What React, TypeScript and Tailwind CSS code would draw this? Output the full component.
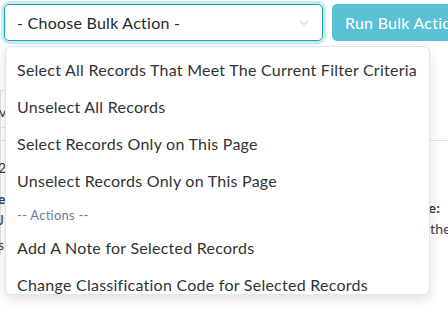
import { ChevronDown } from 'lucide-react';

const items = [
  'Select All Records That Meet The Current Filter Criteria',
  'Unselect All Records',
  'Select Records Only on This Page',
  'Unselect Records Only on This Page',
];

const actions = [
  'Add A Note for Selected Records',
  'Change Classification Code for Selected Records',
  'Export Selected Records',
];

export default function App() {
  return (
    <div className="relative w-[448px] h-[316px] overflow-hidden bg-white text-[#343a40] tracking-[0.25px] font-['Lato','Noto_Sans',sans-serif]">
      {/* toolbar */}
      <div className="flex items-start gap-[9px] pl-[4px] pt-[4px]">
        <div className="flex h-[37px] w-[319px] shrink-0 items-center justify-between rounded-[5px] border border-[#1ba3b6] pl-[12px] pr-[11px] text-[16px] text-[#25292d] shadow-[0_0_0_3px_#c9ebf0]">
          <span>- Choose Bulk Action -</span>
          <ChevronDown className="h-[14px] w-[14px] text-[#b7b7b7]" strokeWidth={1.5} />
        </div>
        <div className="flex h-[37px] shrink-0 items-center whitespace-nowrap rounded-[5px] bg-[#5bc1d5] px-[13px] text-[16px] text-white">
          Run Bulk Action
        </div>
      </div>

      {/* page content behind the menu */}
      <div className="mt-[49px] border-l border-[#dee2e6] text-[14px]">
        <div className="h-[37px] w-[120px] border-t border-[#dee2e6] pt-[10px]">
          <span className="-ml-[2px]">view</span>
        </div>
        <div className="h-[13px] w-[120px] border-t border-[#dee2e6]" />
        <div className="flex justify-between border-t border-[#dee2e6]">
          <div className="pt-[16px]">
            <div className="-ml-[3px]">2</div>
            <div className="-ml-[3px] mt-[10px] font-bold">e</div>
            <div className="-ml-[3px]">J</div>
            <div className="-ml-[3px] mt-[4px]">s</div>
          </div>
          <div className="pt-[56px] pr-[0px] text-right">
            <div className="pr-[8px] font-bold">Date:</div>
            <div className="-mr-[3px]">the</div>
          </div>
        </div>
      </div>

      {/* dropdown menu */}
      <div className="absolute left-[5px] top-[46px] h-[249px] w-[425px] overflow-hidden rounded-[6px] border border-[#e3e4e8] bg-white pt-[4px] shadow-[0_4px_12px_rgba(0,0,0,0.12)]">
        {items.map((label) => (
          <div key={label} className="flex h-[37px] items-center whitespace-nowrap px-[11px] text-[16px] text-[#2f3337]">
            {label}
          </div>
        ))}
        <div className="flex h-[30px] items-center px-[11px] pt-[3px] text-[13px] text-[#6d7b91]">-- Actions --</div>
        {actions.map((label) => (
          <div key={label} className="flex h-[37px] items-center whitespace-nowrap px-[11px] text-[16px] text-[#2f3337]">
            {label}
          </div>
        ))}
      </div>
    </div>
  );
}
